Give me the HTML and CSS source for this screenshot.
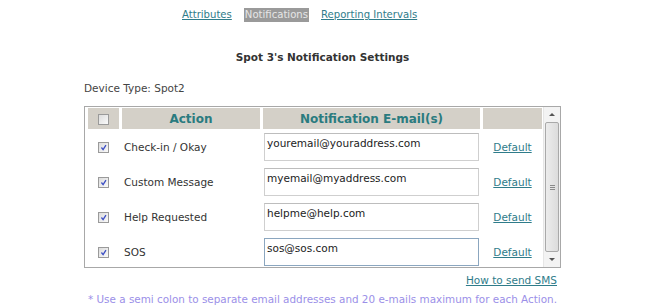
FILE: index.html
```html
<!DOCTYPE html>
<html lang="en">
<head>
    <meta charset="UTF-8">
    <title>Notification Settings</title>
    <link rel="stylesheet" href="styles.css">
</head>
<body>
    <div class="page">
        <nav class="tabs">
            <a href="#">Attributes</a>
            <span class="current">Notifications</span>
            <a href="#">Reporting Intervals</a>
        </nav>
        <h1 class="title">Spot 3's Notification Settings</h1>
        <p class="device">Device Type: Spot2</p>
        <div class="box">
            <div class="scroll-area">
                <table class="grid">
                    <colgroup>
                        <col class="col-check">
                        <col class="col-action">
                        <col class="col-email">
                        <col class="col-default">
                    </colgroup>
                    <thead>
                        <tr>
                            <th><span class="cb"></span></th>
                            <th>Action</th>
                            <th>Notification E-mail(s)</th>
                            <th></th>
                        </tr>
                    </thead>
                    <tbody>
                        <tr>
                            <td class="center"><span class="cb checked"><svg viewBox="0 0 11 11"><path d="M3 5.5 L5 8 L8.5 2.5" /></svg></span></td>
                            <td class="action">Check-in / Okay</td>
                            <td><div class="email">youremail@youraddress.com</div></td>
                            <td class="center"><a href="#">Default</a></td>
                        </tr>
                        <tr>
                            <td class="center"><span class="cb checked"><svg viewBox="0 0 11 11"><path d="M3 5.5 L5 8 L8.5 2.5" /></svg></span></td>
                            <td class="action">Custom Message</td>
                            <td><div class="email">myemail@myaddress.com</div></td>
                            <td class="center"><a href="#">Default</a></td>
                        </tr>
                        <tr>
                            <td class="center"><span class="cb checked"><svg viewBox="0 0 11 11"><path d="M3 5.5 L5 8 L8.5 2.5" /></svg></span></td>
                            <td class="action">Help Requested</td>
                            <td><div class="email">helpme@help.com</div></td>
                            <td class="center"><a href="#">Default</a></td>
                        </tr>
                        <tr>
                            <td class="center"><span class="cb checked"><svg viewBox="0 0 11 11"><path d="M3 5.5 L5 8 L8.5 2.5" /></svg></span></td>
                            <td class="action">SOS</td>
                            <td><div class="email focus">sos@sos.com</div></td>
                            <td class="center"><a href="#">Default</a></td>
                        </tr>
                    </tbody>
                </table>
            </div>
            <div class="scrollbar">
                <div class="arrow up"></div>
                <div class="track">
                    <div class="thumb"><span class="grip"></span></div>
                </div>
                <div class="arrow down"></div>
            </div>
        </div>
        <div class="sms"><a href="#">How to send SMS</a></div>
        <p class="note">* Use a semi colon to separate email addresses and 20 e-mails maximum for each Action.</p>
    </div>
</body>
</html>
```

FILE: styles.css
```css
body {
    margin: 0;
    padding: 0;
    background-color: #fff;
    color: #333;
    font-family: "DejaVu Sans", Verdana, sans-serif;
    font-size: 10.5px;
}
a {
    color: #2f7c8a;
    text-decoration: underline;
}
.page {
    width: 477px;
    margin-left: 84px;
    padding-top: 8px;
}
.tabs {
    display: flex;
    gap: 12px;
    padding-left: 98px;
    height: 14px;
    line-height: 14px;
    font-size: 10.1px;
}
.tabs .current {
    background-color: #9a9a9a;
    color: #e6e6e6;
    padding: 0 1px;
}
.title {
    margin: 28px 0 0;
    text-align: center;
    font-size: 10.5px;
    line-height: 14px;
    color: #333;
}
.device {
    margin: 17px 0 0;
    font-size: 10.5px;
    line-height: 14px;
    color: #444;
}
.box {
    display: flex;
    margin-top: 11px;
    height: 160px;
    border: 1px solid #a8a8a8;
    overflow: hidden;
}
.scroll-area {
    width: 460px;
    overflow: hidden;
}
.grid {
    width: 460px;
    table-layout: fixed;
    border-collapse: separate;
    border-spacing: 3px 0;
    margin-top: 1px;
}
.col-check { width: 31px; }
.col-action { width: 138px; }
.col-email { width: 217px; }
.col-default { width: 59px; }
.grid th {
    height: 21px;
    padding: 0;
    background-color: #d4d0c8;
    color: #2a7b7f;
    font-size: 12px;
    text-align: center;
    vertical-align: middle;
}
.grid td {
    height: 35px;
    padding: 0;
    vertical-align: middle;
}
.grid td.center {
    text-align: center;
}
.grid td.action {
    padding-left: 2px;
    color: #333;
}
.email {
    box-sizing: border-box;
    width: 215px;
    height: 28px;
    margin: 0 auto;
    padding: 3px 2px;
    border: 1px solid #cfcfcf;
    border-top-color: #bdbdbd;
    background-color: #fff;
    color: #222;
    line-height: 13px;
}
.email.focus {
    border-color: #8ba6bf;
}
.cb {
    display: inline-block;
    box-sizing: border-box;
    width: 11px;
    height: 11px;
    vertical-align: middle;
    border: 1px solid #9a9a9a;
    background: linear-gradient(135deg, #dcdcdc, #fafafa);
}
.cb svg {
    display: block;
    width: 9px;
    height: 9px;
}
.cb svg path {
    fill: none;
    stroke: #3d4fc4;
    stroke-width: 1.6;
}
.scrollbar {
    display: flex;
    flex-direction: column;
    width: 16px;
    background-color: #f3f3f3;
    border-left: 1px solid #e6e6e6;
}
.arrow {
    height: 15px;
    position: relative;
}
.arrow::after {
    content: "";
    position: absolute;
    left: 5px;
    border-left: 3px solid transparent;
    border-right: 3px solid transparent;
}
.arrow.up::after {
    top: 6px;
    border-bottom: 3px solid #555;
}
.arrow.down::after {
    top: 6px;
    border-top: 3px solid #555;
}
.track {
    flex: 1;
    display: flex;
    flex-direction: column;
    padding: 0 1px;
}
.thumb {
    flex: 1;
    display: flex;
    align-items: center;
    justify-content: center;
    border: 1px solid #a9a9a9;
    border-radius: 2px;
    background: linear-gradient(90deg, #ececec, #dcdcdc);
}
.grip {
    width: 5px;
    height: 5px;
    border-top: 1px solid #8a8a8a;
    border-bottom: 1px solid #8a8a8a;
    background: linear-gradient(#8a8a8a, #8a8a8a) center / 5px 1px no-repeat;
    box-sizing: border-box;
}
.sms {
    margin-top: 5px;
    line-height: 14px;
    text-align: right;
    padding-right: 4px;
}
.note {
    margin: 5px 0 0;
    font-size: 10.4px;
    line-height: 14px;
    text-align: center;
    color: #9b8fe8;
}
```
